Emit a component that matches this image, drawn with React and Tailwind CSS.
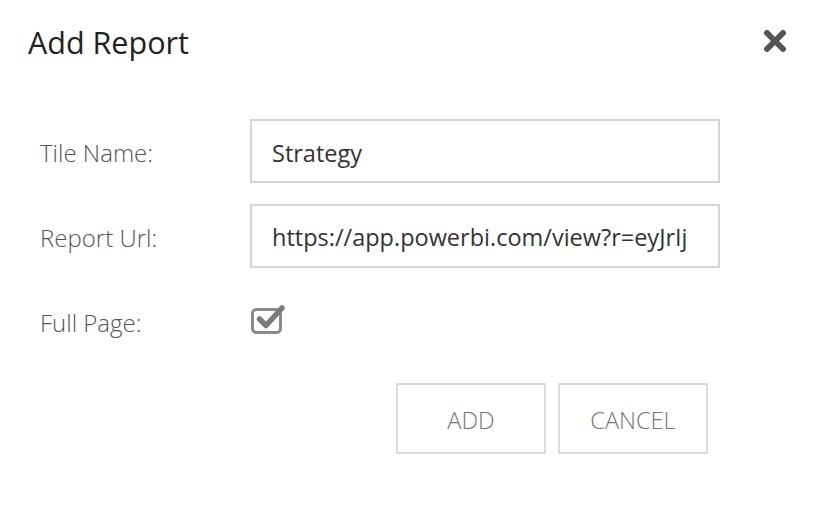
import React from 'react';

const font = { fontFamily: '"Open Sans", "Noto Sans", sans-serif' };

function CheckIcon() {
  return (
    <svg width="38" height="34" viewBox="0 0 38 34">
      <rect x="2.5" y="8.5" width="28" height="23" rx="4" fill="none" stroke="#8a8a8a" strokeWidth="3" />
      <path d="M9.5 18 L16 24.5 L32 7" fill="none" stroke="#7a7a7a" strokeWidth="5.5" strokeLinecap="round" strokeLinejoin="round" />
    </svg>
  );
}

function CloseIcon() {
  return (
    <svg width="24" height="24" viewBox="0 0 24 24">
      <path d="M4 4 L20 20 M20 4 L4 20" stroke="#555" strokeWidth="6" strokeLinecap="round" />
    </svg>
  );
}

function Row({ label, children }) {
  return (
    <div className="flex items-center h-[64px]">
      <label className="w-[210px] text-[24px] font-light text-[#555] pt-[4px]">{label}</label>
      {children}
    </div>
  );
}

export default function App() {
  return (
    <div className="w-[819px] h-[505px] bg-white" style={font}>
      <div className="flex items-center justify-between pl-[28px] pr-[32px] pt-[20px]">
        <h1 className="text-[30.5px] text-[#222] leading-[44px]">Add Report</h1>
        <button className="mt-[-2px]"><CloseIcon /></button>
      </div>

      <div className="pl-[40px] pt-[55px] flex flex-col gap-[21px]">
        <Row label="Tile Name:">
          <div className="w-[470px] h-[64px] border-2 border-[#d4d4d4] flex items-center px-[20px] pt-[6px] text-[23.5px] text-[#333] overflow-hidden whitespace-nowrap">
            Strategy
          </div>
        </Row>
        <Row label="Report Url:">
          <div className="w-[470px] h-[64px] border-2 border-[#d4d4d4] flex items-center px-[20px] pt-[4px] text-[23.5px] text-[#333] overflow-hidden whitespace-nowrap">
            https://app.powerbi.com/view?r=eyJrIj
          </div>
        </Row>
        <Row label="Full Page:">
          <div className="mt-[-6px]"><CheckIcon /></div>
        </Row>
      </div>

      <div className="flex justify-end gap-[12px] pr-[111px] pt-[30px]">
        <button className="w-[150px] h-[71px] border-2 border-[#dcdcdc] pt-[4px] text-[23.5px] font-light text-[#777]">ADD</button>
        <button className="w-[150px] h-[71px] border-2 border-[#dcdcdc] pt-[4px] text-[23.5px] font-light text-[#777]">CANCEL</button>
      </div>
    </div>
  );
}
